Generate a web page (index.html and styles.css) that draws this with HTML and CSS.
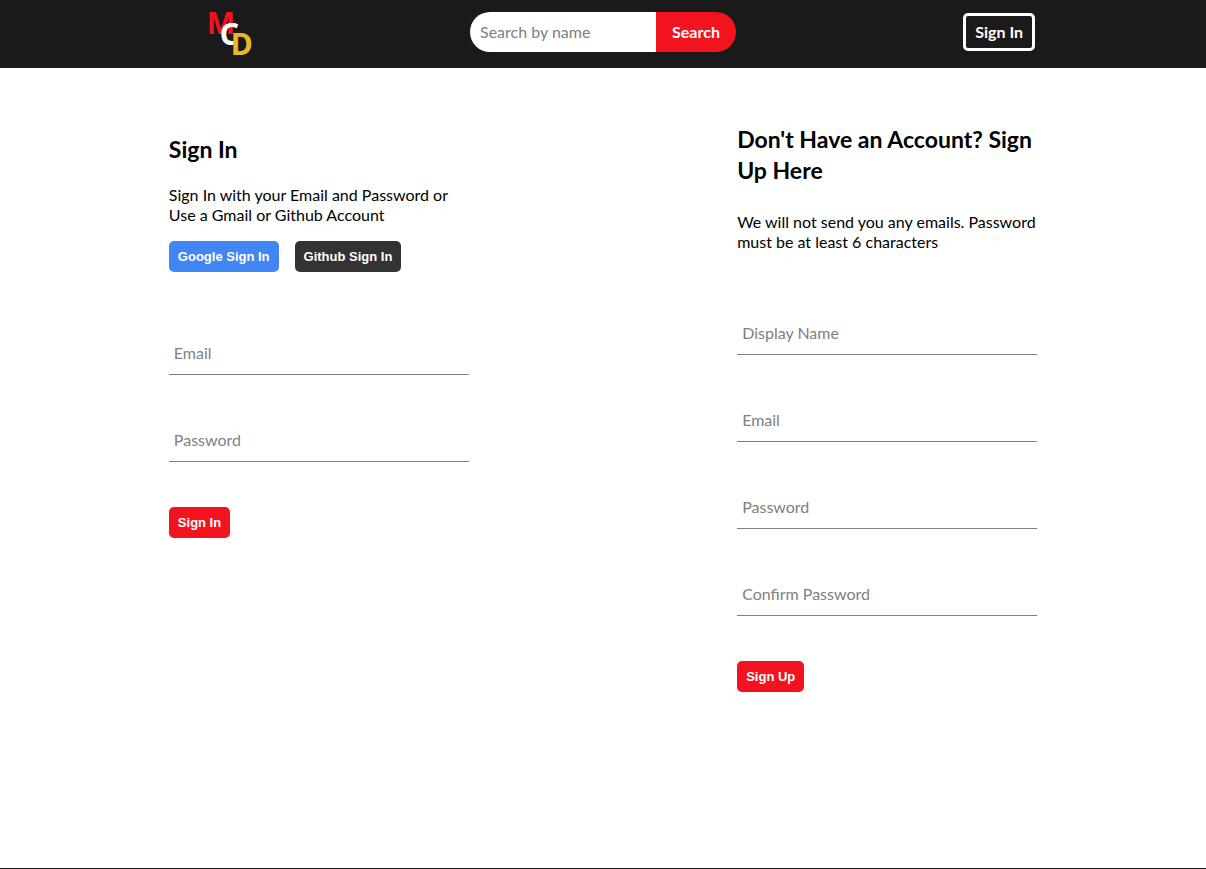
FILE: index.html
```html
<!DOCTYPE html>
<html lang="en">
<head>
  <meta charset="utf-8">
  <meta name="viewport" content="width=device-width, initial-scale=1">
  <title>Sign In</title>
  <link rel="stylesheet" href="styles.css">
</head>
<body>
  <header class="site-header">
    <div class="header-inner">
      <a class="logo" href="#" aria-label="MCD home"><span class="logo-m">M</span><span class="logo-c">C</span><span class="logo-d">D</span></a>
      <form class="search" role="search">
        <input class="search-input" type="text" placeholder="Search by name" aria-label="Search by name">
        <button class="search-button" type="submit">Search</button>
      </form>
      <a class="header-link" href="#sign-in">Sign In</a>
    </div>
  </header>
  <main class="accounts">
    <section class="panel panel-sign-in" id="sign-in">
      <h2 class="panel-title">Sign In</h2>
      <p class="panel-text">Sign In with your Email and Password or Use a Gmail or Github Account</p>
      <div class="providers">
        <button class="button button-google" type="button">Google Sign In</button>
        <button class="button button-github" type="button">Github Sign In</button>
      </div>
      <form class="form">
        <input class="field" type="email" placeholder="Email" aria-label="Email">
        <input class="field" type="password" placeholder="Password" aria-label="Password">
        <button class="button" type="submit">Sign In</button>
      </form>
    </section>
    <section class="panel panel-sign-up">
      <h2 class="panel-title">Don't Have an Account? Sign Up Here</h2>
      <p class="panel-text">We will not send you any emails. Password must be at least 6 characters</p>
      <form class="form">
        <input class="field" type="text" placeholder="Display Name" aria-label="Display Name">
        <input class="field" type="email" placeholder="Email" aria-label="Email">
        <input class="field" type="password" placeholder="Password" aria-label="Password">
        <input class="field" type="password" placeholder="Confirm Password" aria-label="Confirm Password">
        <button class="button" type="submit">Sign Up</button>
      </form>
    </section>
  </main>
  <footer class="site-footer"></footer>
</body>
</html>
```
FILE: styles.css
```css
* {
  box-sizing: border-box;
}

body {
  margin: 0;
  background: #fff;
  color: #000;
  font-family: Lato, sans-serif;
  font-size: 16px;
  line-height: 20px;
  min-height: 100vh;
  display: flex;
  flex-direction: column;
}

input,
button {
  font: inherit;
  border: 0;
  margin: 0;
}

button {
  cursor: pointer;
}

.site-header {
  background: #1b1a1a;
  padding: 12px 0;
}

.header-inner {
  width: 72%;
  margin: 0 auto;
  display: grid;
  grid-template-columns: 1fr auto 1fr;
  align-items: start;
}

.logo {
  display: grid;
  grid-template: 12px 10px 10px 12px / 13px 11px 20px;
  margin-left: 38px;
  font-family: "Noto Sans", sans-serif;
  font-size: 30px;
  font-weight: 700;
  line-height: 22px;
  text-decoration: none;
}

.logo-m {
  grid-area: 1 / 1 / 3 / 3;
  color: #f2131e;
}

.logo-c {
  grid-area: 2 / 2 / 4 / 4;
  color: #fff;
  line-height: 20px;
}

.logo-d {
  grid-area: 3 / 3 / 5 / 4;
  color: #e9b824;
  line-height: 20px;
}

.search {
  display: flex;
  height: 40px;
}

.search-input {
  width: 186px;
  padding: 0 10px;
  border-radius: 20px 0 0 20px;
  background: #fff;
}

.search-button {
  width: 80px;
  padding: 0;
  border-radius: 0 20px 20px 0;
  background: #f2131e;
  color: #fff;
  font-weight: 700;
}

.header-link {
  justify-self: end;
  width: 72px;
  margin: 1px 2px 0 0;
  padding: 6px 0;
  border: 3px solid #fff;
  border-radius: 5px;
  color: #fff;
  font-weight: 700;
  text-align: center;
  text-decoration: none;
}

.accounts {
  flex: 1;
  width: 72%;
  margin: 0 auto;
  display: flex;
  justify-content: space-between;
  align-items: flex-start;
}

.panel {
  width: 300px;
}

.panel-sign-in {
  padding-top: 66px;
}

.panel-sign-up {
  padding-top: 56px;
}

.panel-title {
  margin: 0 0 20px;
  font-size: 23px;
  line-height: 31px;
}

.panel-sign-up .panel-title {
  margin-bottom: 26px;
}

.panel-text {
  margin: 0;
}

.providers {
  display: flex;
  gap: 16px;
  margin: 16px 0 61px;
}

.form {
  display: flex;
  flex-direction: column;
  align-items: flex-start;
  gap: 45px;
}

.panel-sign-up .form {
  margin-top: 61px;
}

.field {
  width: 100%;
  height: 42px;
  padding: 0 5px 2px;
  border-bottom: 1px solid #808080;
  background: transparent;
}

.field::placeholder,
.search-input::placeholder {
  color: #808080;
}

.button {
  padding: 8px 9px;
  border-radius: 5px;
  background: #f2131e;
  color: #fff;
  font-family: "Liberation Sans", Arial, sans-serif;
  font-size: 13px;
  font-weight: 700;
  line-height: 15px;
}

.button-google {
  background: #4285f4;
}

.button-github {
  background: #333;
}

.site-footer {
  height: 1px;
  background: #1b1a1a;
}
```
